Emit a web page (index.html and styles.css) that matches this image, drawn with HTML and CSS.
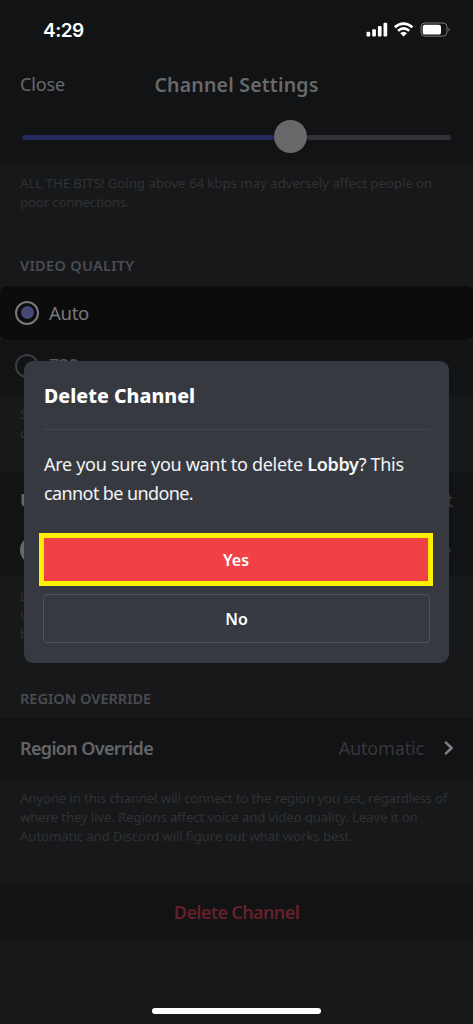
FILE: index.html
```html
<!DOCTYPE html>
<html lang="en">
<head>
<meta charset="utf-8">
<title>Channel Settings</title>
<link rel="stylesheet" href="styles.css">
</head>
<body>
<div class="screen">
  <header class="top">
    <div class="status">
      <span class="time">4:29</span>
      <svg class="status-icons" width="86" height="16" viewBox="0 0 86 16">
        <g fill="#fff">
          <rect x="0.5" y="9.7" width="3.7" height="4.8" rx="1"/>
          <rect x="6.2" y="7.2" width="3.7" height="7.3" rx="1"/>
          <rect x="11.9" y="4" width="3.7" height="10.5" rx="1"/>
          <rect x="17.5" y="0.7" width="3.7" height="13.8" rx="1"/>
          <path d="M37.6 14.2L34.6 11.2Q37.6 8.8 40.6 11.2Z" stroke="#fff" stroke-width=".6" stroke-linejoin="round"/>
        </g>
        <path d="M28.8 5.3Q37.6-2.2 46.4 5.3M32 8.7Q37.6 4 43.2 8.7" fill="none" stroke="#fff" stroke-width="2.6"/>
        <rect x="55" y="1" width="26" height="13.2" rx="4" fill="none" stroke="#77787a"/>
        <rect x="56.7" y="2.7" width="18.3" height="9.9" rx="2.2" fill="#fff"/>
        <path d="M82.5 5.5Q84.8 7.6 82.5 9.8Z" fill="#77787a"/>
      </svg>
    </div>
    <div class="nav">
      <span class="close">Close</span>
      <span class="title">Channel Settings</span>
    </div>
    <div class="slider"><i class="fill"></i><i class="thumb"></i><i class="rest"></i></div>
  </header>
  <p class="note bitrate"><span class="b1">ALL THE BITS! Going above 64 kbps may adversely affect people on</span><br><span class="b2">poor connections.</span></p>
  <h2 class="label video">VIDEO QUALITY</h2>
  <div class="option selected"><span class="radio"></span><span>Auto</span></div>
  <div class="option next"><span class="radio"></span><span class="resolution">720</span></div>
  <p class="note quality">S<br>c</p>
  <div class="limit">
    <div class="limit-row"><b>U</b><span>t</span></div>
    <div class="limit-slider"><i class="knob"></i><i class="end"></i></div>
  </div>
  <p class="note users">L<br>U<br>b</p>
  <h2 class="label region">REGION OVERRIDE</h2>
  <div class="region-row">
    <b class="region-name">Region Override</b>
    <span class="region-value">Automatic</span>
    <svg width="10" height="16" viewBox="0 0 10 16"><path d="M1.2 1.8L7.6 8L1.2 14.2" fill="none" stroke="#818285" stroke-width="2.5"/></svg>
  </div>
  <p class="note about"><span class="a1">Anyone in this channel will connect to the region you set, regardless of</span><br><span class="a2">where they live. Regions affect voice and video quality. Leave it on</span><br><span class="a3">Automatic and Discord will figure out what works best.</span></p>
  <div class="delete-row"><span>Delete Channel</span></div>
  <footer class="home"><i></i></footer>

  <section class="dialog">
    <h1><span>Delete Channel</span></h1>
    <p class="message"><span class="m1">Are you sure you want to delete <b>Lobby</b>? This</span><br><span class="m2">cannot be undone.</span></p>
    <button class="yes">Yes</button>
    <button class="no">No</button>
  </section>
</div>
</body>
</html>
```
FILE: styles.css
```css
* { box-sizing: border-box; margin: 0; padding: 0; }
body { background: #17181a; font-family: "Noto Sans", "Open Sans", sans-serif; }
i { display: block; flex: none; }
span, b { white-space: nowrap; }
.screen { position: relative; width: 473px; height: 1024px; overflow: hidden; display: flex; flex-direction: column; background: #17181a; }
.screen > * { flex: none; }
.top { height: 164px; background: #121315; }
.status { height: 60px; padding: 0 19px 0 43px; display: flex; align-items: center; justify-content: space-between; }
.time { font: 600 19px Inter, sans-serif; color: #fff; letter-spacing: -.5px; }
.status-icons { margin-right: 2px; }
.nav { height: 48px; padding: 0 20px; display: grid; grid-template-columns: 1fr auto 1fr; align-items: center; color: #68696c; }
.close { font-size: 18px; letter-spacing: -.15px; padding-bottom: 1px; }
.title { font-size: 19.5px; font-weight: 600; letter-spacing: .2px; }
.slider { height: 57px; padding: 0 22px; display: flex; align-items: center; }
.fill { width: 252px; height: 5px; margin-top: 2px; border-radius: 3px; background: #252a60; }
.thumb { width: 33px; height: 33px; border-radius: 50%; background: #68686a; }
.rest { flex: 1; height: 5px; margin-top: 2px; border-radius: 3px; background: #303237; }
.note { padding: 0 20px; font-size: 13.3px; line-height: 19px; color: #303133; }
.b1 { letter-spacing: -.08px; }
.b2 { letter-spacing: -.18px; }
.bitrate { height: 91px; padding-top: 10px; }
.label { padding: 0 20px; font-size: 14.5px; font-weight: 600; line-height: 20px; color: #4b4c51; }
.video { height: 31px; letter-spacing: .3px; }
.option { height: 55px; padding-left: 15px; display: flex; align-items: center; gap: 10px; background: #121315; color: #55565a; font-size: 18.5px; letter-spacing: -.3px; }
.selected { height: 54px; padding-bottom: 1px; background: #0c0c0d; color: #78797b; border-radius: 7px; }
.next { padding-bottom: 3px; }
.resolution { padding-bottom: 4px; letter-spacing: -.9px; }
.radio { width: 24px; height: 24px; border: 2px solid #3b3c3f; border-radius: 50%; display: flex; align-items: center; justify-content: center; }
.selected .radio { border-color: #77787b; }
.selected .radio::after { content: ""; width: 13px; height: 13px; border-radius: 50%; background: #454874; }
.quality { height: 77px; padding-top: 10px; }
.limit { height: 104px; background: #121315; color: #68696c; font-size: 18px; }
.limit-row { height: 56px; padding: 0 20px; display: flex; align-items: center; justify-content: space-between; }
.limit-row span { color: #3c3d40; }
.limit-slider { height: 44px; padding: 0 22px 0 20px; display: flex; align-items: center; justify-content: space-between; }
.knob { width: 28px; height: 28px; border-radius: 50%; background: #68686a; }
.end { width: 20px; height: 5px; border-radius: 3px; background: #303237; }
.users { height: 112px; padding-top: 11px; }
.region { height: 30px; letter-spacing: 0; }
.region-row { height: 61px; padding: 0 19px 1px 20px; display: flex; align-items: center; background: #121315; font-size: 18px; color: #646568; }
.region-name { font-weight: 600; letter-spacing: -.65px; }
.region-value { margin-left: auto; margin-right: 20px; color: #36373a; letter-spacing: -.15px; }
.about { height: 105px; padding-top: 10px; }
.a1, .a2 { letter-spacing: -.18px; }
.a3 { letter-spacing: -.15px; }
.delete-row { height: 55px; display: flex; align-items: center; justify-content: center; background: #121315; color: #64202a; font-size: 18px; font-weight: 600; letter-spacing: -.62px; }
.home { height: 85px; display: flex; justify-content: center; align-items: flex-end; padding-bottom: 10px; }
.home i { width: 169px; height: 6px; border-radius: 3px; background: #fff; }
.dialog { position: absolute; left: 24px; top: 361px; width: 425px; height: 302px; padding: 0 19px; border-radius: 9px; background: #373941; color: #f3f4f5; display: flex; flex-direction: column; }
.dialog h1 { height: 69px; border-bottom: 1px solid #44474d; font-size: 19.5px; font-weight: 800; line-height: 69px; letter-spacing: .05px; color: #fff; margin: 0 1px; }
.message { height: 103px; padding: 20px 1px 0; font-size: 18px; line-height: 28.5px; }
.message b { font-weight: 600; letter-spacing: -.3px; }
.m1 { letter-spacing: -.3px; }
.m2 { letter-spacing: -.6px; }
.dialog button { font: 600 16px "Noto Sans", sans-serif; color: #fff; flex: none; }
.yes { height: 53px; margin: 0 -3px 0 -4px; border: 5px solid #fff000; background: #ef4146; }
.no { height: 49px; margin-top: 8px; border: 1px solid #50535a; border-radius: 4px; background: transparent; }
```
